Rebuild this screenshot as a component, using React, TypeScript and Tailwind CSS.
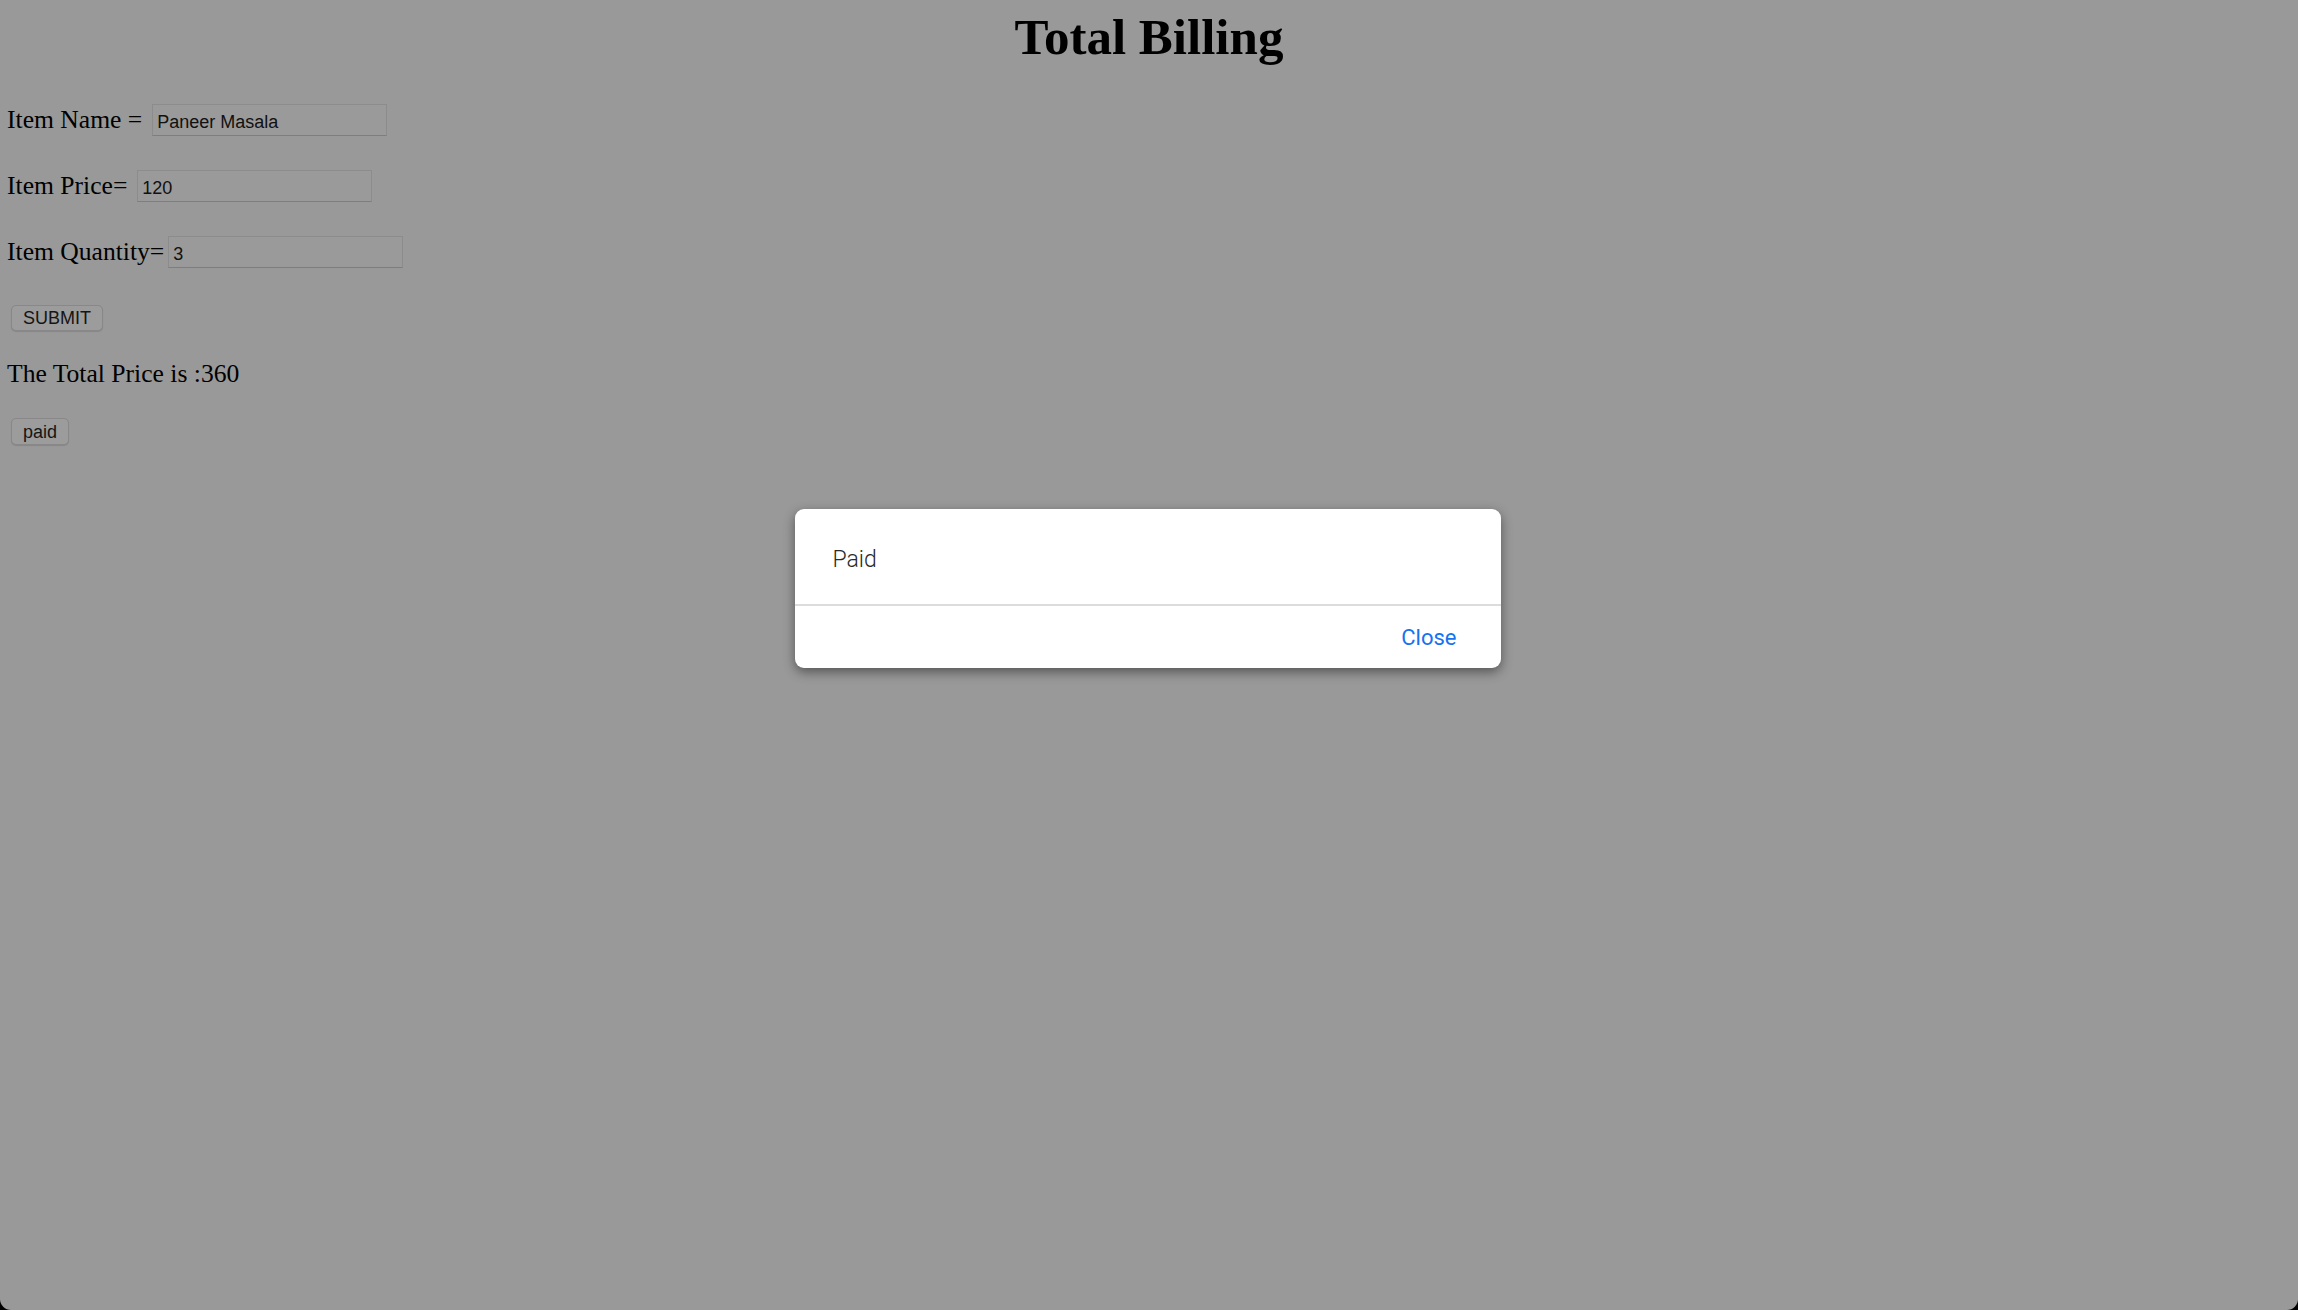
import React from "react";

export default function App() {
  const serif = { fontFamily: '"Liberation Serif", "Times New Roman", serif' };
  return (
    <div className="h-[1310px] w-full bg-black">
      <div
        className="relative h-full w-full overflow-hidden rounded-b-[11px] bg-[#999999] text-black"
        style={serif}
      >
        <h1 className="pt-[9px] text-center text-[51px] font-bold leading-[56px]">Total Billing</h1>

        <div className="mt-[39px] flex flex-col gap-[34px] pl-[7px] text-[25.6px] leading-[32px]">
          <div className="flex h-[32px] items-center">
            <span>Item Name =</span>
            <input
              readOnly
              value="Paneer Masala"
              className="ml-[10px] h-[32px] w-[235px] border border-[#8c8c8c] border-b-[#7e7e7e] bg-[#9a9a9a] px-[4px] pt-[3px] text-[18px] text-[#111] outline-none font-['Liberation_Sans',Arial,sans-serif]"
            />
          </div>
          <div className="flex h-[32px] items-center">
            <span>Item Price=</span>
            <input
              readOnly
              value="120"
              className="ml-[10px] h-[32px] w-[235px] border border-[#8c8c8c] border-b-[#7e7e7e] bg-[#9a9a9a] px-[4px] pt-[3px] text-[18px] text-[#111] outline-none font-['Liberation_Sans',Arial,sans-serif]"
            />
          </div>
          <div className="flex h-[32px] items-center">
            <span>Item Quantity=</span>
            <input
              readOnly
              value="3"
              className="ml-[4px] h-[32px] w-[235px] border border-[#8c8c8c] border-b-[#7e7e7e] bg-[#9a9a9a] px-[4px] pt-[3px] text-[18px] text-[#111] outline-none font-['Liberation_Sans',Arial,sans-serif]"
            />
          </div>
        </div>

        <div className="pl-[11px] pt-[37px]">
          <button className="h-[26px] rounded-[5px] border border-[#888888] bg-[#9c9c9c] px-[11px] text-[18px] leading-[22px] text-[#151515] shadow-[0_1px_1px_rgba(0,0,0,0.12)] font-['Liberation_Sans',Arial,sans-serif]">
            SUBMIT
          </button>
        </div>

        <p className="mt-[27px] pl-[7px] text-[25.6px] leading-[32px]">The Total Price is :360</p>

        <div className="pl-[11px] pt-[28px]">
          <button className="h-[27px] rounded-[5px] border border-[#888888] bg-[#9c9c9c] px-[11px] text-[18px] leading-[22px] text-[#151515] shadow-[0_1px_1px_rgba(0,0,0,0.12)] font-['Liberation_Sans',Arial,sans-serif]">
            paid
          </button>
        </div>

        <div className="absolute inset-x-0 top-[509px] flex justify-center">
          <div className="mr-[3px] w-[706px] overflow-hidden rounded-[9px] bg-white shadow-[0_4px_12px_rgba(0,0,0,0.45)] font-['Roboto',sans-serif]">
            <div className="h-[95px] pl-[38px] pt-[37px] text-[23px] font-light leading-[28px] text-[#2a2a2a]">
              Paid
            </div>
            <div className="h-[2px] bg-[#dcdcdc]" />
            <div className="flex h-[62px] justify-end pr-[44px] pt-[18px]">
              <span className="text-[22px] leading-[28px] text-[#1672f0]">Close</span>
            </div>
          </div>
        </div>
      </div>
    </div>
  );
}
